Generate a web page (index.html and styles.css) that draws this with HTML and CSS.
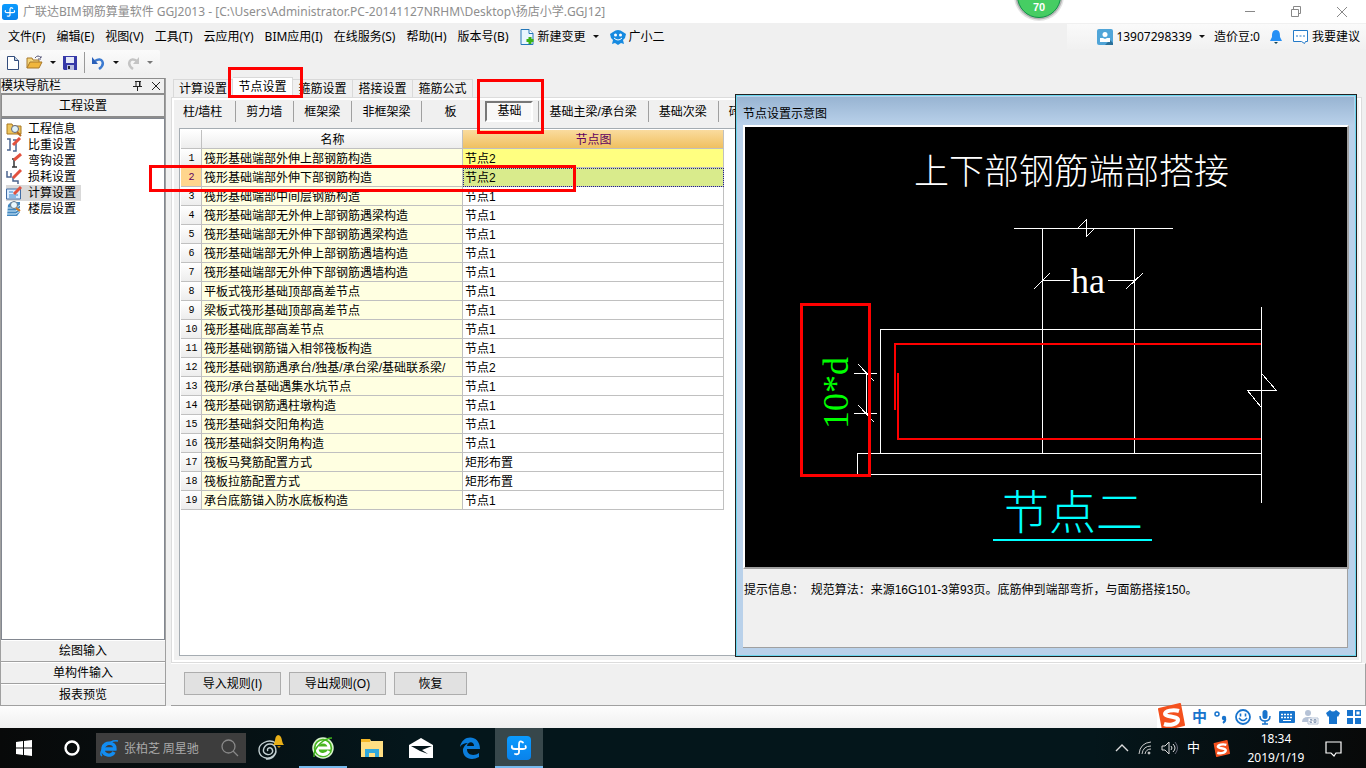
FILE: index.html
```html
<!DOCTYPE html>
<html lang="zh-CN">
<head>
<meta charset="utf-8">
<title>广联达BIM钢筋算量软件 GGJ2013</title>
<link rel="stylesheet" href="styles.css">
</head>
<body>
<svg class="defs" width="0" height="0" aria-hidden="true">
  <defs>
    <linearGradient id="blue" x1="0" y1="0" x2="0" y2="1"><stop offset="0" stop-color="#0a9bff"/><stop offset="1" stop-color="#0a82ea"/></linearGradient>
    <symbol id="app" viewBox="0 0 24 24"><rect width="24" height="24" rx="4" fill="url(#blue)"/><path d="M16 6.500q-4-3-4 2v7.500q0 3-4 2M5 10q-1 3 3 3h8q4 0 2.500-3" fill="none" stroke="#fff" stroke-width="1.800" stroke-linecap="round"/></symbol>
    <symbol id="sogou" viewBox="0 0 28 28"><path d="M2 6L23 1l4 21L6 27z" fill="#f4511e" stroke="#f4511e" stroke-width="2" stroke-linejoin="round"/><path d="M22 8C16 6 8 8 8 11s13 2 13 6-8 6-14 4" fill="none" stroke="#fff" stroke-width="4"/></symbol>
    <symbol id="ie" viewBox="0 0 20 20"><path d="M3 11h13c1-7-11-8-12-1-1 8 9 9 11 4" fill="none" stroke="currentColor" stroke-width="3.4"/><path d="M3 18C-2 14 11 1 19 3" fill="none" stroke="currentColor" stroke-width="1.5"/></symbol>
  </defs>
</svg>

<header class="titlebar">
  <svg width="16" height="16"><use href="#app"/></svg>
  <h1 class="title">广联达BIM钢筋算量软件 GGJ2013 - [C:\Users\Administrator.PC-20141127NRHM\Desktop\扬店小学.GGJ12]</h1>
  <div class="winctl">
    <button aria-label="最小化"><svg width="12" height="12"><path d="M1 5.500h10" stroke="#888"/></svg></button>
    <button aria-label="还原"><svg width="12" height="12" fill="none" stroke="#888"><path d="M1.500 3.500h7v7h-7zM3.500 3V.5h7v7H9"/></svg></button>
    <button aria-label="关闭"><svg width="12" height="12"><path d="M1 1l10 10M11 1L1 11" stroke="#888"/></svg></button>
  </div>
</header>
<svg class="ball" width="60" height="30"><circle cx="30" cy="-4" r="25" fill="#e4e4e4"/><circle cx="30" cy="-4" r="23.500" fill="#b4b4b4"/><circle cx="30" cy="-4" r="21.500" fill="#46cd63" stroke="#109248"/><text x="30" y="11" text-anchor="middle">70</text></svg>

<nav class="menubar">
  <button>文件(F)</button><button>编辑(E)</button><button>视图(V)</button><button>工具(T)</button><button>云应用(Y)</button><button>BIM应用(I)</button><button>在线服务(S)</button><button>帮助(H)</button><button>版本号(B)</button>
  <button class="iconed"><svg width="15" height="16"><path d="M1 .5h8l4 4v11H1z" fill="#e9f5ff" stroke="#2477b8"/><path d="M9 .5v4h4" fill="#fff" stroke="#2477b8"/><path d="M10 8v7M6.500 11.500h7" stroke="#3bb314" stroke-width="3"/></svg>新建变更<i class="caret"></i></button>
  <button class="iconed"><svg width="16" height="16"><path d="M3 3Q8-1 13 3l3 2-1 4-2 2 1 4-3-1-3 2-3-2-3 1 1-4-2-2-1-4z" fill="#168ae0"/><circle cx="5.500" cy="6" r="1.500" fill="#fff"/><circle cx="10.500" cy="6" r="1.500" fill="#fff"/><path d="M4 9q4 4 8 0" fill="none" stroke="#fff"/></svg>广小二</button>
  <div class="account">
    <button class="iconed phone"><svg width="16" height="16"><rect width="16" height="16" rx="2" fill="#50a5d8"/><path d="M8 16l5-5 3 3v2z" fill="#2a7099"/><circle cx="8" cy="5.500" r="2.500" fill="#fff"/><path d="M3 9h3l2 1 2-1h3v4H3z" fill="#fff"/></svg>13907298339<i class="caret"></i></button>
    <span>造价豆:0</span>
    <svg width="14" height="16"><path d="M7 1c-4 0-4 4-4 7l-2 4h12l-2-4c0-3 0-7-4-7z" fill="#2690f5"/><path d="M5 13h4l-2 2z" fill="#145"/></svg>
    <button class="iconed"><svg width="17" height="16"><path d="M1.500 1.500h14v11h-2l-1 2-3-2h-8z" fill="#fff" stroke="#247ac8"/><path d="M4 7h2M7.500 7h2M11 7h2" stroke="#247ac8"/></svg>我要建议</button>
  </div>
</nav>

<div class="toolrow">
<div class="toolbar">
  <button aria-label="新建"><svg width="12" height="14"><path d="M.5.5h7l4 4v9H.5z" fill="#fff" stroke="#334d7c"/><path d="M7.500.5v4h4" fill="#bcd" stroke="#334d7c"/></svg></button>
  <button aria-label="打开"><svg width="17" height="15"><path d="M1 13V3h5l1 2h6v3" fill="#f5d77c" stroke="#a8792b"/><path d="M1 13l3-6h12l-3 6z" fill="#f0b63c" stroke="#a8792b"/><path d="M9 3q3-4 6 0V1m0 3h-3" fill="none" stroke="#557"/></svg></button><i class="caret"></i>
  <button aria-label="保存"><svg width="14" height="14"><path d="M0 0h14v14H1L0 13z" fill="#3538a8"/><path d="M3 1h8v6H3z" fill="#e4e8f8"/><path d="M4 9h7v5H4z" fill="#b8bde0"/><path d="M5 10h2v3H5z" fill="#223"/></svg></button>
  <span class="sep"></span>
  <button aria-label="撤销"><svg width="14" height="14"><path d="M3 5c7-5 11 3 4 8" fill="none" stroke="#3c7ad0" stroke-width="2.500"/><path d="M0 1v7h6z" fill="#2a5fb8"/></svg></button><i class="caret"></i>
  <button aria-label="重做" disabled><svg width="14" height="14"><path d="M11 5C4 0 0 8 7 13" fill="none" stroke="#c4c4c4" stroke-width="2.500"/><path d="M13 1v7H7z" fill="#c4c4c4"/></svg></button><i class="caret dim"></i>
</div>
</div>

<main class="work">
  <aside class="side">
    <div class="sidehead"><span>模块导航栏</span>
      <svg width="10" height="10"><path d="M2 .5h6M3 .5v5M7 .5v5M0 5.500h9M4.500 6v4M6.500 1v4" stroke="#222" fill="none"/></svg>
      <svg width="10" height="10"><path d="M1 1l8 8M9 1L1 9" stroke="#222"/></svg>
    </div>
    <button class="sidebtn first">工程设置</button>
    <ul class="tree">
      <li><svg width="16" height="16"><path d="M1 3h5l1 2h8v8H1z" fill="#efc65d" stroke="#a87820"/><circle cx="9" cy="8" r="3.500" fill="#dff2fa" stroke="#667"/><path d="M11 11l4 4" stroke="#b76b20" stroke-width="2"/></svg><a href="#info">工程信息</a></li>
      <li><svg width="16" height="16" fill="none"><path d="M1 2h3v11H1M7 3h3v11H7" stroke="#4c6590" stroke-width="1.500"/><path d="M7 8l7-7" stroke="#e2513e" stroke-width="3"/></svg><a href="#weight">比重设置</a></li>
      <li><svg width="16" height="16" fill="none"><path d="M6 6h4M8 7v7M6 14h5" stroke="#333" stroke-width="1.500"/><path d="M8 7l7-6" stroke="#e2513e" stroke-width="3"/></svg><a href="#hook">弯钩设置</a></li>
      <li><svg width="16" height="16" fill="none"><path d="M1 2v6h4V4M7 8v4h5v3" stroke="#4c6590" stroke-width="1.500"/><path d="M7 9l8-8" stroke="#e2513e" stroke-width="3"/></svg><a href="#loss">损耗设置</a></li>
      <li class="on"><svg width="16" height="16"><path d="M.5 4h14v10H.5z" fill="#d9ecff" stroke="#426da5"/><path d="M3 7h4M3 10h9M3 12h7" stroke="#3d85c8"/><path d="M8 9l7-7" stroke="#e2513e" stroke-width="3"/></svg><a href="#calc">计算设置</a></li>
      <li><svg width="16" height="16"><path d="M2 4l3-3h9v10l-3 4H1z" fill="#4388c0"/><path d="M1 7h9l4-3M1 10h9l4-3M1 13h9l4-3" stroke="#d8eefa" fill="none"/><circle cx="8" cy="4" r="3.500" fill="#e9f8ff" stroke="#678"/><path d="M10 7l4 3" stroke="#d77a20" stroke-width="2"/></svg><a href="#floor">楼层设置</a></li>
    </ul>
    <button class="sidebtn">绘图输入</button>
    <button class="sidebtn">单构件输入</button>
    <button class="sidebtn">报表预览</button>
  </aside>

  <section class="content">
    <div class="tabs">
      <button>计算设置</button><button class="on">节点设置</button><button>箍筋设置</button><button>搭接设置</button><button>箍筋公式</button>
    </div>
    <div class="panel">
      <div class="subtabs">
        <button>柱/墙柱</button><button>剪力墙</button><button>框架梁</button><button>非框架梁</button><button class="slab">板</button><button class="on"><b>基础</b></button><button>基础主梁/承台梁</button><button>基础次梁</button><button>砖</button>
      </div>
      <div class="gridbox">
        <table class="grid">
          <colgroup><col class="cn"><col class="cw"><col class="cw"></colgroup>
          <thead><tr><th></th><th>名称</th><th class="hot">节点图</th></tr></thead>
          <tbody>
            <tr class="yellow"><th>1</th><td>筏形基础端部外伸上部钢筋构造</td><td>节点2</td></tr>
            <tr class="current"><th>2</th><td>筏形基础端部外伸下部钢筋构造</td><td>节点2</td></tr>
            <tr><th>3</th><td>筏形基础端部中间层钢筋构造</td><td>节点1</td></tr>
            <tr><th>4</th><td>筏形基础端部无外伸上部钢筋遇梁构造</td><td>节点1</td></tr>
            <tr><th>5</th><td>筏形基础端部无外伸下部钢筋遇梁构造</td><td>节点1</td></tr>
            <tr><th>6</th><td>筏形基础端部无外伸上部钢筋遇墙构造</td><td>节点1</td></tr>
            <tr><th>7</th><td>筏形基础端部无外伸下部钢筋遇墙构造</td><td>节点1</td></tr>
            <tr><th>8</th><td>平板式筏形基础顶部高差节点</td><td>节点1</td></tr>
            <tr><th>9</th><td>梁板式筏形基础顶部高差节点</td><td>节点1</td></tr>
            <tr><th>10</th><td>筏形基础底部高差节点</td><td>节点1</td></tr>
            <tr><th>11</th><td>筏形基础钢筋锚入相邻筏板构造</td><td>节点1</td></tr>
            <tr><th>12</th><td>筏形基础钢筋遇承台/独基/承台梁/基础联系梁/</td><td>节点2</td></tr>
            <tr><th>13</th><td>筏形/承台基础遇集水坑节点</td><td>节点1</td></tr>
            <tr><th>14</th><td>筏形基础钢筋遇柱墩构造</td><td>节点1</td></tr>
            <tr><th>15</th><td>筏形基础斜交阳角构造</td><td>节点1</td></tr>
            <tr><th>16</th><td>筏形基础斜交阴角构造</td><td>节点1</td></tr>
            <tr><th>17</th><td>筏板马凳筋配置方式</td><td>矩形布置</td></tr>
            <tr><th>18</th><td>筏板拉筋配置方式</td><td>矩形布置</td></tr>
            <tr><th>19</th><td>承台底筋锚入防水底板构造</td><td>节点1</td></tr>
          </tbody>
        </table>
      </div>
    </div>
    <div class="actions"><button>导入规则(I)</button><button>导出规则(O)</button><button class="short">恢复</button></div>
  </section>
</main>

<section class="dialog" aria-label="节点设置示意图">
  <h2>节点设置示意图</h2>
  <svg class="cad" viewBox="745 127 602 440">
    <rect x="745" y="127" width="602" height="440" fill="#000"/>
    <g fill="none" stroke="#fff" shape-rendering="crispEdges">
      <path d="M1014 228.500h159M1042.500 228v225M1134.500 228v225M1042 280.500h28M1108 280.500h26M880.500 453V329.500H1261M1261.500 307v196M1261 453.500H857.500v21H1261M1247 390.500h30"/>
      <path d="M1078 228l8-8v17l8-8M1034 289l16-16M1126 289l17-16M1262 374l14 16M1247 390l14 17"/>
      <path d="M866.500 373v40M854 373.500h23M854 413.500h23M858 364l16 17M858 405l16 17"/>
    </g>
    <g fill="none" stroke="#f00" stroke-width="2" shape-rendering="crispEdges"><path d="M1261 344H895v66M898 373v66h363"/></g>
    <path d="M993 540h159" stroke="#0ff" stroke-width="2"/>
    <text class="cadtitle" x="914" y="184">上下部钢筋端部搭接</text>
    <text class="dim" x="1071" y="293" fill="#fff">ha</text>
    <text class="dim" transform="translate(848 429) rotate(-90)" fill="#0f0">10*d</text>
    <text class="cadname" x="1002" y="529">节点二</text>
    <rect x="801.500" y="304.500" width="68" height="171" fill="none" stroke="#f00" stroke-width="3"/>
  </svg>
  <p>提示信息：&nbsp; 规范算法：来源16G101-3第93页。底筋伸到端部弯折，与面筋搭接150。</p>
</section>

<div class="mark m1"></div><div class="mark m2"></div><div class="mark m3"></div>

<div class="strip">
  <div class="ime">
    <svg width="28" height="28"><use href="#sogou"/></svg>
    <span>中</span>
    <svg width="14" height="16"><circle cx="3" cy="5" r="2" fill="none" stroke="#1874cd" stroke-width="1.500"/><circle cx="10" cy="9" r="2.200" fill="#1874cd"/><path d="M11 9q1 3-2 5" fill="none" stroke="#1874cd" stroke-width="2"/></svg>
    <svg width="16" height="16"><circle cx="8" cy="8" r="7" fill="none" stroke="#1874cd" stroke-width="1.800"/><path d="M5.500 4.500v3M10.500 4.500v3M4 9q4 5 8 0" fill="none" stroke="#1874cd" stroke-width="1.600"/></svg>
    <svg width="14" height="16"><rect x="4.500" y="1" width="5" height="9" rx="2.500" fill="#1874cd"/><path d="M2 7q0 5 5 5t5-5M7 12v3M4 15h6" fill="none" stroke="#1874cd" stroke-width="1.500"/></svg>
    <svg width="16" height="14"><rect y="1" width="16" height="12" rx="1" fill="#1874cd"/><path d="M2 4.500h12M2 7.500h12" stroke="#fff" stroke-width="1.500" stroke-dasharray="2 1"/><path d="M4 10.500h8" stroke="#fff"/></svg>
    <svg width="17" height="16"><circle cx="6" cy="4" r="3" fill="#b5c2d6"/><path d="M0 13q0-5 6-5t6 5z" fill="#b5c2d6"/><path d="M6 9h10v6H6z" fill="#fff" stroke="#b5c2d6"/><path d="M8 10.500h2v1.500H8v1.500h2M12 10.500h2v3h-2zM12 12h2" fill="none" stroke="#8fa0ba"/></svg>
    <svg width="14" height="14"><path d="M4 0q3 3 6 0l4 3-2 4-1-1v8H3V6L2 7 0 3z" fill="#1874cd"/></svg>
    <svg width="14" height="14"><path d="M0 0h6v6H0zM0 8h6v6H0zM8 8h6v6H8z" fill="#1874cd"/><path d="M8.700.7h4.600v4.600H8.700z" fill="none" stroke="#1874cd" stroke-width="1.400"/></svg>
  </div>
</div>

<footer class="taskbar">
  <button class="start" aria-label="开始"><svg width="16" height="16"><path d="M0 2l7-1v6.500H0zM8 1l8-1v7.500H8zM0 8.500h7V15l-7-1zM8 8.500h8V16l-8-1z" fill="#fff"/></svg></button>
  <button class="start" aria-label="小娜"><svg width="16" height="16"><circle cx="8" cy="8" r="6.500" fill="none" stroke="#fff" stroke-width="2.400"/></svg></button>
  <label class="search"><svg width="20" height="20" color="#128df2"><use href="#ie"/></svg><input type="text" value="张柏芝 周星驰" aria-label="搜索"><svg width="18" height="18"><circle cx="7.500" cy="7.500" r="6.500" fill="none" stroke="#888" stroke-width="1.300"/><path d="M12 12l5 5" stroke="#888" stroke-width="1.300"/></svg></label>
  <button class="app swirl" aria-label="搜狗浏览器"><svg width="30" height="28"><g fill="none" stroke="#c3d0d2" stroke-width="1.400"><path d="M19 9C11 4 1 10 2 17s9 9 14 5 3-12-3-12-9 8-4 10 8-2 6-5-6 0-4 2M18 13c3 6-2 13-9 12"/></g><path d="M16 11c3-2 1-9 5-10 5 1 3 7 6 10z" fill="#e9b018"/><path d="M20 12h4l-2 2z" fill="#c58800"/></svg></button>
  <button class="app open" aria-label="浏览器"><svg width="24" height="24"><circle cx="12" cy="12" r="10" fill="#49b51f" stroke="#d9f4cc" stroke-width="1.500"/><path d="M6 12h12c0-8-12-8-12 0s9 8 12 3" fill="none" stroke="#fff" stroke-width="3"/><path d="M3 21C2 11 14 2 21 2" fill="none" stroke="#40b51d" stroke-width="1.500"/></svg></button>
  <button class="app" aria-label="文件资源管理器"><svg width="22" height="20"><path d="M0 1h9l1 2h12v16H0z" fill="#ffdf83"/><path d="M0 1h9v3H0z" fill="#f5b727"/><path d="M4 19v-8h14v8h-4v-4H8v4z" fill="#31a9dc"/></svg></button>
  <button class="app" aria-label="邮件"><svg width="24" height="20"><path d="M0 7l12-7 12 7v13H0z" fill="#fff"/><path d="M2 8h21l-10 4 6 4-8-3z" fill="#04151a"/></svg></button>
  <button class="app" aria-label="Edge"><svg width="20" height="22"><path d="M0 10C2-3 20-3 20 12H7c0 7 8 7 12 4v4C10 25 2 20 3 12c1-3 3-5 5-6-4 0-6 1-8 4zM7 9h7C14 4 8 4 7 9z" fill="#0b7ddb"/></svg></button>
  <button class="app open active" aria-label="广联达"><svg width="24" height="24"><use href="#app"/></svg></button>
  <div class="tray">
    <svg width="14" height="14"><path d="M1 10l6-6 6 6" fill="none" stroke="#ddd" stroke-width="1.400"/></svg>
    <svg width="14" height="14" fill="none" stroke="#ccc"><path d="M1 13Q2 2 13 1M4 13q1-8 9-8M7 13q1-5 6-5"/><circle cx="11" cy="12" r="1" fill="#ccc"/></svg>
    <svg width="17" height="14" fill="none" stroke="#ddd"><path d="M1 5h3l4-4v12L4 9H1zM10 5q2 2 0 4M12 3q4 4 0 8"/><path d="M14 1q5 6 0 12" stroke="#667"/></svg>
    <span>中</span>
    <svg class="sg" width="17" height="17"><use href="#sogou"/></svg>
    <time>18:34<br>2019/1/19</time>
    <svg width="17" height="17"><path d="M1 2h15v11h-5l-2 3-3-3H1z" fill="none" stroke="#fff" stroke-width="1.200"/></svg>
  </div>
</footer>
</body>
</html>
```

FILE: styles.css
```css
* { box-sizing: border-box; }
body {
  margin: 0; min-height: 100vh; display: flex; flex-direction: column; position: relative;
  background: #f0f0f0; color: #000; overflow: hidden;
  font: 12px/16px "Liberation Sans", "Noto Sans CJK SC", sans-serif;
}
button { font: inherit; color: inherit; border: 0; background: none; padding: 0; white-space: nowrap; }
svg { display: block; flex: none; }
.defs { position: absolute; }
i.caret { width: 0; height: 0; border: 3px solid transparent; border-top-color: #111; border-bottom: 0; }
i.dim { border-top-color: #777; }

.titlebar { height: 23px; background: #fff; display: flex; align-items: center; padding: 0 14px 0 2px; gap: 5px; }
.title { margin: 0; font: 12px/16px "Noto Sans", "Noto Sans CJK SC", sans-serif; color: #8e8e8e; white-space: nowrap; }
.winctl { margin-left: auto; display: flex; gap: 34px; padding-right: 4px; }
.ball { position: absolute; left: 1009px; top: 0; }
.ball text { font: bold 11px "Liberation Sans", sans-serif; fill: #fff; }

.menubar { height: 27px; display: flex; align-items: center; gap: 11px; padding-left: 8px; font-family: "Noto Sans", "Noto Sans CJK SC", sans-serif; }
.iconed { display: flex; align-items: center; gap: 3px; }
.iconed .caret { margin-left: 4px; }
.account { margin-left: auto; display: flex; align-items: center; gap: 9px; height: 25px; padding: 0 6px 0 30px; background: linear-gradient(#fafafa, #f1f1f1); }

.toolrow { height: 28px; }
.toolbar { width: 160px; height: 25px; display: flex; align-items: center; gap: 7px; padding-left: 7px; background: linear-gradient(#fbfbfb, #efefef); border-radius: 2px; }
.sep { width: 1px; height: 21px; background: #999; }

.work { flex: 1; display: flex; gap: 5px; min-height: 0; }
.side { width: 166px; display: flex; flex-direction: column; border-right: 1px solid #a0a0a0; border-left: 1px solid #a0a0a0; }
.sidehead { height: 16px; display: flex; align-items: center; gap: 8px; padding-right: 3px; border: 1px solid #8c8c8c; border-left: 0; }
.sidehead span { margin-right: auto; }
.sidebtn { height: 22px; background: #f0f0f0; border-bottom: 1px solid #a0a0a0; border-top: 1px solid #fff; }
.sidebtn.first { height: 24px; border: 1px solid #8c8c8c; border-bottom-width: 2px; }
.tree { flex: 1; margin: 0; padding: 2px 4px; list-style: none; background: #fff; border: 1px solid #828790; }
.tree li { display: flex; gap: 4px; width: 75px; height: 16px; align-items: center; white-space: nowrap; }
.tree li.on { background: #d9d9d9; }
.tree a { color: #000; text-decoration: none; padding-left: 2px; }

.content { flex: 1; min-width: 0; display: flex; flex-direction: column; }
.tabs { height: 19px; display: flex; align-items: flex-end; padding-left: 2px; }
.tabs button { width: 60px; height: 18px; border: 1px solid #d9d9d9; border-bottom: 0; border-left: 0; }
.tabs button:first-child { border-left: 1px solid #d9d9d9; }
.tabs .on { height: 20px; background: #fff; padding-bottom: 2px; }
.panel { flex: 1; min-height: 0; display: flex; flex-direction: column; border: 3px solid #fff; outline: 1px solid #dcdcdc; outline-offset: -1px; margin-right: 4px; padding: 1px 5px 4px 5px; }
.subtabs { display: flex; align-items: flex-start; height: 26px; overflow: hidden; margin-bottom: 1px; }
.subtabs button { height: 21px; padding: 0 11px 0 10px; border-right: 1px solid #a0a0a0; }
.subtabs button:first-child { padding: 0 13px 0 4px; }
.subtabs button:last-child { border: 0; }
.subtabs .slab { padding: 0 29px 0 22px; border: 0; }
.subtabs .on { padding: 0 5px 0 0; }
.subtabs b { display: block; width: 48px; line-height: 17px; font-weight: normal; background: #f8f8f8; border: 2px solid; border-color: #777 #fff #fff #777; }
.gridbox { flex: 1; background: #fff; border: 1px solid #a5acb2; padding: 1px; }
.grid { width: 543px; table-layout: fixed; border-collapse: separate; border-spacing: 0; }
.cn { width: 21px; } .cw { width: 261px; }
.grid th, .grid td { height: 19px; padding: 2px 1px 0 2px; border-right: 1px solid #c0c0c0; border-bottom: 1px solid #c0c0c0; font-weight: normal; line-height: 16px; white-space: nowrap; overflow: hidden; }
.grid th { background: linear-gradient(#fff, #ededed); }
.grid tbody th { font: 10px/16px "Liberation Mono", monospace; }
.grid td:nth-child(2) { background: #ffffe1; }
.grid .hot { background: linear-gradient(#fadb9e, #f0c060); color: #600060; }
.grid .yellow td:last-child { background: #ffff80; }
.grid .current td:last-child { background: #d9eb8c; outline: 1px dotted #228; outline-offset: -1px; }
.grid .current th { background: #ffd58d; color: #600060; }
.actions { display: flex; gap: 8px; padding: 8px 13px 10px; border-top: 1px solid #fff; border-bottom: 1px solid #a0a0a0; border-right: 1px solid #a0a0a0; }
.actions button { width: 97px; height: 23px; background: #e1e1e1; border: 1px solid #adadad; }
.actions .short { width: 73px; }

.dialog { position: absolute; right: 9px; top: 94px; width: 622px; height: 563px; border: 1px solid #222; background: #b9d1ea; padding: 3px 8px 8px 7px; box-shadow: inset 0 0 0 1px #6bd6ee; display: flex; flex-direction: column; }
.dialog h2 { margin: -1px -6px 0; padding: 7px 6px 0 6px; height: 28px; font: 12px/18px "Noto Sans CJK SC", sans-serif; background: linear-gradient(#98b4d2, #b9d1ea); }
.cad { width: 606px; height: 444px; border: 2px solid #fff; border-right-color: #a0a0a0; border-bottom-color: #a0a0a0; }
.cadtitle { font: 300 35px "Noto Sans CJK SC", sans-serif; fill: #fff; }
.cadname { font: 300 47px "Noto Sans CJK SC", sans-serif; fill: #0ff; }
.dim { font: 36px "Liberation Serif", serif; }
.dialog p { flex: 1; margin: 0; padding: 13px 0 0 1px; background: #f0f0f0; border-bottom: 1px solid #a0a0a0; border-right: 1px solid #a0a0a0; white-space: nowrap; }

.mark { position: absolute; border: 3px solid #f00; }
.m1 { left: 228px; top: 67px; width: 75px; height: 31px; }
.m2 { left: 477px; top: 79px; width: 67px; height: 55px; }
.m3 { left: 149px; top: 165px; width: 427px; height: 27px; }

.strip { height: 22px; display: flex; justify-content: flex-end; background: linear-gradient(#fdfdfd, #f0f0f0); }
.ime { display: flex; align-items: center; gap: 7px; padding: 0 5px 0 0; background: #fff; color: #1874cd; }
.ime span { font-weight: bold; font-size: 15px; }

.taskbar { height: 40px; display: flex; align-items: center; background: linear-gradient(90deg, #080909, #04161b 30%, #04161b 80%, #080909); color: #fff; }
.start { width: 48px; display: flex; justify-content: center; }
.search { width: 150px; height: 30px; display: flex; align-items: center; gap: 5px; padding: 0 7px 0 3px; background: #3d3d3d; }
.search input { flex: 1; min-width: 0; border: 0; padding: 0; background: none; color: #aaa; font: 12px/16px "Noto Sans CJK SC", sans-serif; }
.app { width: 48px; height: 40px; margin-right: 1px; display: flex; align-items: center; justify-content: center; }
.swirl { width: 52px; }
.open { box-shadow: inset 0 -2px #76b9ed; }
.active { background: #37474b; }
.tray { margin-left: auto; display: flex; align-items: center; gap: 9px; padding-right: 24px; }
.tray span { font-size: 13px; }
.tray .sg { margin-left: 4px; }
.tray time { width: 74px; margin-right: 3px; text-align: center; font: 12px/19px "Noto Sans", sans-serif; }
```
